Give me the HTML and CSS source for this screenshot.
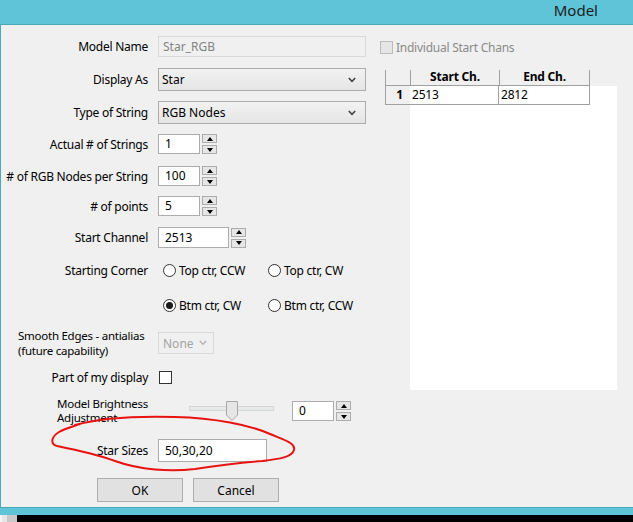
FILE: index.html
```html
<!DOCTYPE html>
<html>
<head>
<meta charset="utf-8">
<link rel="stylesheet" href="styles.css">
</head>
<body>
<div class="window">
  <div class="titlebar"><span class="title">Model</span></div>
  <div class="main">
    <div class="form">
      <div class="lbl">Model Name</div>
      <div class="ctl"><div class="input disabled wide">Star_RGB</div></div>

      <div class="lbl">Display As</div>
      <div class="ctl"><div class="select wide"><span>Star</span><svg class="chev" width="8" height="6" viewBox="0 0 8 6"><path d="M0.8 1 L4 4.3 L7.2 1" fill="none" stroke="#404040" stroke-width="1.6"/></svg></div></div>

      <div class="lbl">Type of String</div>
      <div class="ctl"><div class="select wide"><span>RGB Nodes</span><svg class="chev" width="8" height="6" viewBox="0 0 8 6"><path d="M0.8 1 L4 4.3 L7.2 1" fill="none" stroke="#404040" stroke-width="1.6"/></svg></div></div>

      <div class="lbl">Actual # of Strings</div>
      <div class="ctl"><div class="spinctl"><div class="input num">1</div><div class="spin"><div class="sbtn"><span class="up"></span></div><div class="sbtn"><span class="down"></span></div></div></div></div>

      <div class="lbl"># of RGB Nodes per String</div>
      <div class="ctl"><div class="spinctl"><div class="input num">100</div><div class="spin"><div class="sbtn"><span class="up"></span></div><div class="sbtn"><span class="down"></span></div></div></div></div>

      <div class="lbl"># of points</div>
      <div class="ctl"><div class="spinctl"><div class="input num">5</div><div class="spin"><div class="sbtn"><span class="up"></span></div><div class="sbtn"><span class="down"></span></div></div></div></div>

      <div class="lbl">Start Channel</div>
      <div class="ctl"><div class="spinctl"><div class="input num numwide">2513</div><div class="spin"><div class="sbtn"><span class="up"></span></div><div class="sbtn"><span class="down"></span></div></div></div></div>

      <div class="lbl">Starting Corner</div>
      <div class="ctl radios"><label class="radio"><span class="circle"></span>Top ctr, CCW</label><label class="radio"><span class="circle"></span>Top ctr, CW</label></div>

      <div class="lbl"></div>
      <div class="ctl radios"><label class="radio"><span class="circle on"></span>Btm ctr, CW</label><label class="radio"><span class="circle"></span>Btm ctr, CCW</label></div>

      <div class="lbl left smooth"><div class="line">Smooth Edges - antialias</div><div class="line">(future capability)</div></div>
      <div class="ctl"><div class="select small disabled"><span>None</span><svg class="chev" width="8" height="6" viewBox="0 0 8 6"><path d="M0.8 1 L4 4.3 L7.2 1" fill="none" stroke="#b4b4b4" stroke-width="1.4"/></svg></div></div>

      <div class="lbl">Part of my display</div>
      <div class="ctl"><span class="check"></span></div>

      <div class="lbl left bright"><div class="line">Model Brightness</div><div class="line">Adjustment</div></div>
      <div class="ctl brightctl">
        <svg class="slider" width="86" height="22" viewBox="0 0 86 22">
          <rect x="0.5" y="5.5" width="84" height="4" fill="#e7eaea" stroke="#d6d6d6"/>
          <path d="M37.5 0.5 H48.5 V14 L43 19.5 L37.5 14 Z" fill="#e6e6e6" stroke="#a8a8a8"/>
        </svg>
        <div class="spinctl"><div class="input num">0</div><div class="spin"><div class="sbtn"><span class="up"></span></div><div class="sbtn"><span class="down"></span></div></div></div>
      </div>

      <div class="lbl">Star Sizes</div>
      <div class="ctl"><div class="input sizes">50,30,20</div></div>

      <div class="buttons"><button class="btn">OK</button><button class="btn">Cancel</button></div>
    </div>

    <div class="right">
      <div class="indiv"><span class="check dis"></span><span>Individual Start Chans</span></div>
      <div class="table">
        <div class="thead">
          <div class="th rl"></div>
          <div class="th c1">Start Ch.</div>
          <div class="th c2">End Ch.</div>
        </div>
        <div class="tbody">
          <div class="rlcol"><div class="rlcell">1</div></div>
          <div class="white">
            <div class="row"><div class="td c1">2513</div><div class="td c2">2812</div></div>
          </div>
        </div>
      </div>
    </div>
  </div>
  <div class="bottombar"></div>
  <div class="taskbar"><span class="tb1"></span><span class="tb2"></span></div>

  <svg class="mark" width="633" height="522" viewBox="0 0 633 522">
    <path d="M75 425 C100 418 140 416 175 417 C215 418 250 425 270 434 C284 440 296 443 294 450 C292 457 280 459 262 461 C236 463 215 466 195 469 C170 472 140 470 115 461 C96 454 72 449 57 446 C50 444 51 437 59 432 C64 429 68 428 80 424" fill="none" stroke="#e8120f" stroke-width="2" stroke-linecap="round"/>
  </svg>
</div>
</body>
</html>
```

FILE: styles.css
```css
* { box-sizing: border-box; }
html, body { margin: 0; padding: 0; }
body {
  width: 633px;
  height: 522px;
  overflow: hidden;
  font-family: "Noto Sans", "Open Sans", sans-serif;
  font-size: 12px;
  color: #000;
}
.window {
  position: relative;
  width: 633px;
  height: 522px;
  display: flex;
  flex-direction: column;
}
.titlebar {
  height: 25px;
  background: #60c4d8;
  border-bottom: 1px solid #4aa9b9;
  display: flex;
  justify-content: flex-end;
  align-items: flex-start;
  padding-right: 35px;
}
.title {
  font-size: 15px;
  color: #1c1c1c;
  line-height: 20px;
  margin-top: 0;
}
.main {
  height: 482px;
  background: #f0f0f0;
  border-left: 1px solid #4aa9b9;
  display: flex;
}
.form {
  width: 375px;
  padding-top: 5px;
  display: grid;
  grid-template-columns: 147px 1fr;
  column-gap: 10px;
  grid-template-rows: 32px 35px 31px 32px 32px 28px 35px 30px 40px 36px 32px 36px 42px 36px;
  align-items: center;
}
.lbl {
  text-align: right;
  white-space: nowrap;
  letter-spacing: -0.25px;
}
.lbl.left { text-align: left; }
.lbl.left .line { font-size: 11.5px; line-height: 15px; height: 15px; }
.lbl.smooth { padding-left: 17px; }
.lbl.bright { padding-left: 56px; }
.lbl.bright .line { line-height: 14px; height: 14px; }
.ctl { display: flex; align-items: center; }

.input {
  height: 21px;
  background: #fff;
  border: 1px solid #acacac;
  padding-left: 4px;
  line-height: 19px;
}
.input.wide { width: 208px; }
.input.disabled { background: #f0f0f0; border-color: #d9d9d9; color: #838383; }
.input.num { width: 42px; height: 20px; line-height: 18px; padding-left: 6px; }
.input.numwide { width: 71px; height: 21px; line-height: 19px; }
.input.sizes { width: 109px; height: 23px; line-height: 21px; padding-left: 6px; }

.select {
  height: 23px;
  background: linear-gradient(#f2f2f2, #e5e5e5);
  border: 1px solid #acacac;
  display: flex;
  align-items: center;
  justify-content: space-between;
  padding: 0 9px 0 3px;
}
.select.wide { width: 208px; }
.select.small { width: 56px; height: 22px; padding-left: 4px; padding-right: 6px; background: #f0f0f0; border-color: #d9d9d9; color: #a3a3a3; }

.spinctl { display: flex; align-items: center; gap: 2px; }
.spin { display: flex; flex-direction: column; gap: 2px; }
.sbtn {
  width: 15px;
  height: 9px;
  border: 1px solid #acacac;
  background: #e6e6e6;
  display: flex;
  align-items: center;
  justify-content: center;
}
.up, .down { width: 0; height: 0; border-left: 3.5px solid transparent; border-right: 3.5px solid transparent; }
.up { border-bottom: 4px solid #000; }
.down { border-top: 4px solid #000; }

.radios { display: grid; grid-template-columns: 105px 105px; }
.radio { display: flex; align-items: center; gap: 3px; padding-left: 5px; letter-spacing: -0.25px; }
.circle {
  width: 13px; height: 13px;
  border: 1px solid #333;
  border-radius: 50%;
  background: #fff;
  display: flex; align-items: center; justify-content: center;
}
.circle.on::after { content: ""; width: 7px; height: 7px; border-radius: 50%; background: #1a1a1a; }

.check {
  display: inline-block;
  width: 13px; height: 13px;
  border: 1px solid #333;
  background: #fff;
  margin-left: 1px;
}
.check.dis { border-color: #bcbcbc; background: #e6e6e6; }

.brightctl { gap: 17px; }
.slider { margin-left: 31px; margin-top: 2px; }

.buttons {
  grid-column: 1 / 3;
  align-self: start;
  margin-top: 7px;
  padding-left: 96px;
  display: flex;
  gap: 10px;
}
.btn {
  width: 86px;
  height: 24px;
  border: 1px solid #adadad;
  background: #e1e1e1;
  font-family: inherit;
  font-size: 12px;
  color: #000;
  padding: 0;
}

.right { flex: 1; display: flex; flex-direction: column; }
.indiv {
  margin-top: 16px;
  margin-left: 4px;
  display: flex;
  align-items: center;
  gap: 3px;
  color: #8a8a8a;
  letter-spacing: -0.25px;
  height: 13px;
}
.indiv .check { margin-left: 0; }
.table { margin-top: 16px; margin-left: 9px; width: 232px; }
.thead { display: flex; height: 16px; border-bottom: 1px solid #a0a0a0; width: 205px; }
.th { border-left: 1px solid #a0a0a0; font-weight: bold; text-align: center; line-height: 14px; letter-spacing: -0.2px; }
.th.rl { width: 25px; }
.th.c1 { width: 89px; }
.th.c2 { width: 91px; border-right: 1px solid #a0a0a0; }
.tbody { display: flex; height: 304px; }
.rlcol { width: 25px; }
.rlcell { height: 19px; border-left: 1px solid #a0a0a0; border-bottom: 1px solid #a0a0a0; font-weight: bold; text-align: right; padding-right: 7px; line-height: 18px; }
.white { width: 207px; background: #fff; }
.row { display: flex; height: 19px; border-bottom: 1px solid #a0a0a0; width: 180px; }
.td { line-height: 18px; padding-left: 2px; letter-spacing: -0.2px; }
.td.c1 { width: 89px; border-right: 1px solid #a0a0a0; }
.td.c2 { width: 91px; border-right: 1px solid #a0a0a0; }

.bottombar { height: 8px; background: #60c4d8; border-top: 1px solid #4aa9b9; }
.taskbar { height: 7px; background: #000; display: flex; }
.tb1 { width: 7px; background: #e6e6e6; border-left: 2px solid #f4f4f4; }
.tb2 { width: 10px; background: #c8c8c8; }

.mark { position: absolute; left: 0; top: 0; pointer-events: none; }
```
